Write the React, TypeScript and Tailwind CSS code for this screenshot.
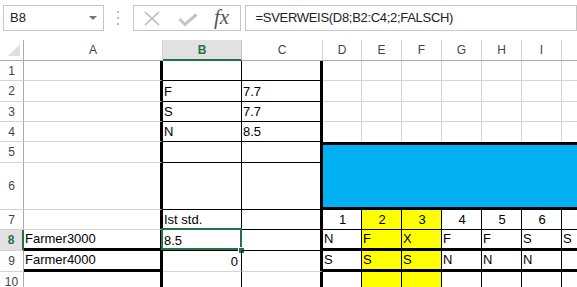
import React from 'react';

const GR = 'border-r border-r-[#d4d4d4]';
const KR = 'border-r border-r-black';
const TR = 'border-r-[3px] border-r-black';
const GB = 'border-b border-b-[#d4d4d4]';
const KB = 'border-b border-b-black';
const TB = 'border-b-[3px] border-b-black';

// J is off-screen in the shot, so its header stays blank
const letters = ['A', 'B', 'C', 'D', 'E', 'F', 'G', 'H', 'I', ''];
const topRows = [
  ['1', '', ''],
  ['2', 'F', '7.7'],
  ['3', 'S', '7.7'],
  ['4', 'N', '8.5'],
];
const nums = ['1', '2', '3', '4', '5', '6', ''];
const row8 = ['N', 'F', 'X', 'F', 'F', 'S', 'S'];
const row9 = ['S', 'S', 'S', 'N', 'N', 'N', ''];

function Cell({ b, className = '', children }: { b: string; className?: string; children?: React.ReactNode }) {
  return (
    <div className={`relative flex items-end whitespace-nowrap pb-[2px] pl-px leading-[15px] ${b} ${className}`}>
      {children}
    </div>
  );
}

function RowHead({ n, sel }: { n: string; sel?: boolean }) {
  if (sel) {
    return (
      <div className="flex items-center justify-center border-r-2 border-r-[#217346] border-b border-b-[#d4d4d4] bg-[#e1e1e1] text-[12px] font-bold text-[#217346]">
        {n}
      </div>
    );
  }
  return (
    <div className="flex items-center justify-center border-r border-r-[#ababab] border-b border-b-[#d4d4d4] text-[12px] text-[#444]">
      {n}
    </div>
  );
}

const yellow = (i: number) => (i === 1 || i === 2 ? 'bg-[#ffff00]' : '');

export default function App() {
  return (
    <div className="w-[577px] h-[287px] overflow-hidden bg-white font-['Liberation_Sans',Arial,sans-serif] text-[13px] text-black">
      {/* formula bar */}
      <div className="h-[40px] flex items-start pt-[5px]">
        <div className="ml-[3px] w-[103px] h-[26px] border border-[#c6c6c6] flex items-center justify-between pl-[6px] pr-[6px]">
          <span className="text-[13px] text-[#222]">B8</span>
          <svg width="8" height="4" viewBox="0 0 8 4">
            <polygon points="0,0 8,0 4,4" fill="#777" />
          </svg>
        </div>
        <div className="ml-[13px] mt-[6px] flex flex-col gap-[4px]">
          <div className="w-[2px] h-[2px] bg-[#bdbdbd]" />
          <div className="w-[2px] h-[2px] bg-[#bdbdbd]" />
          <div className="w-[2px] h-[2px] bg-[#bdbdbd]" />
        </div>
        <div className="ml-[14px] w-[110px] h-[26px] border border-[#c6c6c6] flex items-center">
          <svg className="ml-[10px]" width="16" height="15" viewBox="0 0 16 15">
            <path d="M1 1 L15 14 M15 1 L1 14" stroke="#b4b4b4" strokeWidth="1.4" fill="none" />
          </svg>
          <svg className="ml-[18px] mt-[3px]" width="20" height="14" viewBox="0 0 20 14">
            <polyline points="1.5,6 7,11.5 18.5,1.5" stroke="#c4c4c4" strokeWidth="3" fill="none" />
          </svg>
          <span className="ml-[16px] font-['Liberation_Serif',serif] italic text-[21px] leading-none text-[#555] -mt-[2px]">fx</span>
        </div>
        <div className="ml-[4px] w-[340px] h-[26px] border border-[#c6c6c6] flex items-center pl-[10px]">
          <span className="text-[13px] tracking-[-0.3px] text-[#222]">=SVERWEIS(D8;B2:C4;2;FALSCH)</span>
        </div>
      </div>

      {/* sheet */}
      <div className="grid grid-cols-[24px_139px_79px_81px_39px_40px_40px_40px_40px_40px_64px] grid-rows-[21px_20px_21px_20px_20px_21px_47px_20px_21px_21px_20px]">
        {/* column headers */}
        <div className="flex items-end justify-end pr-[3px] pb-[4px] border-r border-r-[#ababab] border-b border-b-[#ababab]">
          <svg width="12" height="12" viewBox="0 0 12 12">
            <polygon points="0,12 12,0 12,12" fill="#dfdfdf" />
          </svg>
        </div>
        {letters.map((l, i) =>
          l === 'B' ? (
            <div key={i} className="flex items-center justify-center bg-[#e1e1e1] border-r border-r-[#c6c6c6] border-b-2 border-b-[#217346] text-[12px] font-bold text-[#217346]">
              {l}
            </div>
          ) : (
            <div key={i} className="flex items-center justify-center border-r border-r-[#d4d4d4] border-b border-b-[#ababab] text-[12px] text-[#444]">
              {l}
            </div>
          )
        )}

        {/* rows 1-4 */}
        {topRows.map(([n, b, c]) => (
          <React.Fragment key={n}>
            <RowHead n={n} />
            <Cell b={`${TR} ${GB}`} />
            <Cell b={`${KR} ${KB}`}>{b}</Cell>
            <Cell b={`${TR} ${KB}`}>{c}</Cell>
            {nums.map((_, i) => (
              <Cell key={i} b={n === '4' ? GR : `${GR} ${GB}`} />
            ))}
          </React.Fragment>
        ))}

        {/* row 5 */}
        <RowHead n="5" />
        <Cell b={`${TR} ${GB}`} />
        <Cell b={`${KR} ${KB}`} />
        <Cell b={`${TR} ${KB}`} />
        <div className="col-span-7 row-span-2 bg-[#00b0f0] border-t-[3px] border-b-[3px] border-black" />

        {/* row 6 */}
        <RowHead n="6" />
        <Cell b={`${TR} ${GB}`} />
        <Cell b={`${KR} ${KB}`} />
        <Cell b={`${TR} ${KB}`} />

        {/* row 7 */}
        <RowHead n="7" />
        <Cell b={`${TR} ${GB}`} />
        <Cell b={`${KR} ${KB}`}>Ist std.</Cell>
        <Cell b={`${TR} ${KB}`} />
        {nums.map((t, i) => (
          <Cell key={i} b={`${KR} ${KB}`} className={`justify-center ${yellow(i)}`}>
            {t}
          </Cell>
        ))}

        {/* row 8 */}
        <RowHead n="8" sel />
        <Cell b={`${TR} ${TB}`}>Farmer3000</Cell>
        <Cell b={`${KR} ${KB}`}>
          8.5
          <div className="absolute -left-[2px] -top-[2px] -right-[1px] bottom-0 border-2 border-[#217346]" />
          <div className="absolute -right-[3px] -bottom-[3px] w-[6px] h-[6px] bg-[#217346] border-l border-t border-white" />
        </Cell>
        <Cell b={`${TR} ${KB}`} />
        {row8.map((t, i) => (
          <Cell key={i} b={`${KR} ${TB}`} className={yellow(i)}>
            {t}
          </Cell>
        ))}

        {/* row 9 */}
        <RowHead n="9" />
        <Cell b={`${TR} ${TB}`}>Farmer4000</Cell>
        <Cell b={`${KR} ${GB}`} className="justify-end pr-[3px]">0</Cell>
        <Cell b={`${TR} ${GB}`} />
        {row9.map((t, i) => (
          <Cell key={i} b={`${KR} ${TB}`} className={yellow(i)}>
            {t}
          </Cell>
        ))}

        {/* row 10 */}
        <RowHead n="10" />
        <Cell b={`${TR} ${GB}`} />
        <Cell b={`${KR} ${GB}`} />
        <Cell b={`${TR} ${GB}`} />
        {nums.map((_, i) => (
          <Cell key={i} b={`${KR} ${GB}`} className={yellow(i)} />
        ))}
      </div>
    </div>
  );
}
